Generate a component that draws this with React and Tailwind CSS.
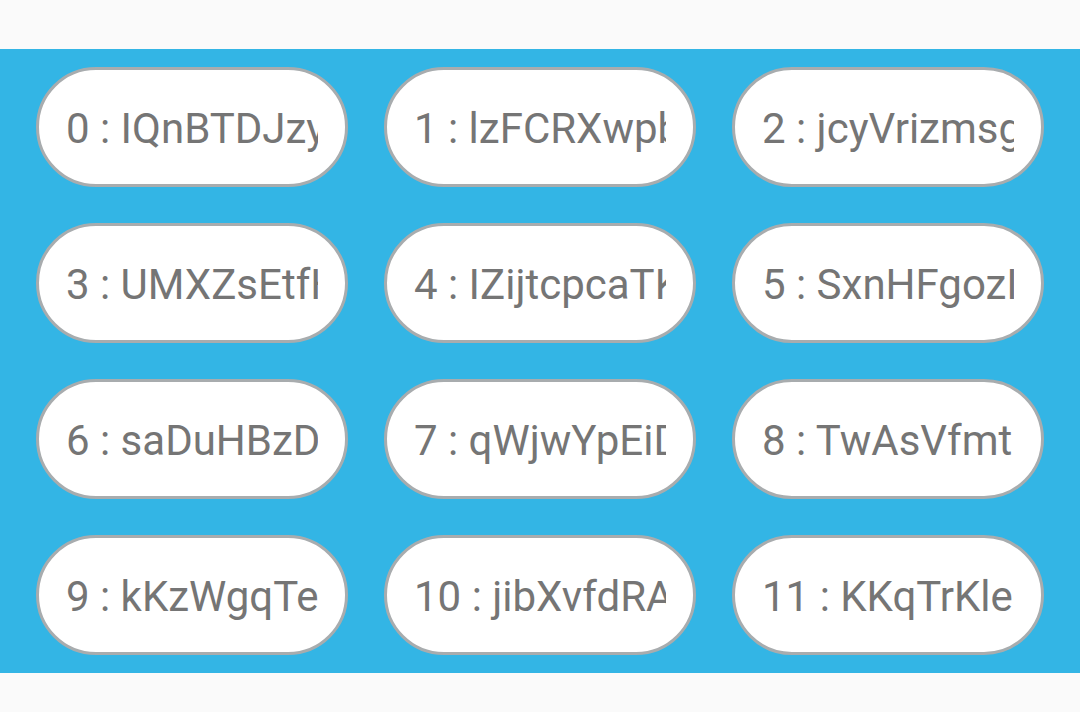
const labels = [
  '0 : IQnBTDJzy', '1 : lzFCRXwpb', '2 : jcyVrizmsg',
  '3 : UMXZsEtfH', '4 : IZijtcpcaTK', '5 : SxnHFgozI',
  '6 : saDuHBzD', '7 : qWjwYpEiD', '8 : TwAsVfmt',
  '9 : kKzWgqTe', '10 : jibXvfdRA', '11 : KKqTrKleo',
];

export default function App() {
  return (
    <main className="min-h-screen bg-[#fafafa] py-[49px] font-['Roboto',sans-serif]">
      <ul className="grid grid-cols-3 gap-9 bg-[#33b5e5] px-9 py-[18px]">
        {labels.map((label) => (
          <li
            key={label}
            className="h-30 min-w-0 rounded-full border-3 border-[#a8acae] bg-white px-[27px] pt-[34px]"
          >
            <span className="block overflow-hidden whitespace-nowrap text-[42px] leading-[49px] text-[#757575]">
              {label}
            </span>
          </li>
        ))}
      </ul>
    </main>
  );
}
